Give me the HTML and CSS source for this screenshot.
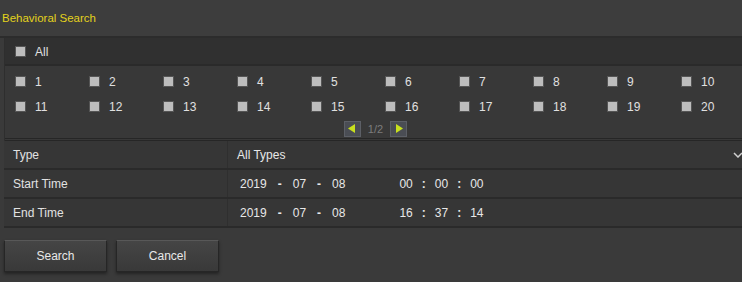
FILE: index.html
```html
<!DOCTYPE html>
<html lang="en">
<head>
    <meta charset="UTF-8">
    <title>Behavioral Search</title>
    <link rel="stylesheet" href="styles.css">
</head>
<body>
    <div class="title">Behavioral Search</div>
    <div class="panel">
        <div class="allrow">
            <label class="chk"><span class="box"></span>All</label>
        </div>
        <div class="channels">
            <label class="chk"><span class="box"></span>1</label>
            <label class="chk"><span class="box"></span>2</label>
            <label class="chk"><span class="box"></span>3</label>
            <label class="chk"><span class="box"></span>4</label>
            <label class="chk"><span class="box"></span>5</label>
            <label class="chk"><span class="box"></span>6</label>
            <label class="chk"><span class="box"></span>7</label>
            <label class="chk"><span class="box"></span>8</label>
            <label class="chk"><span class="box"></span>9</label>
            <label class="chk"><span class="box"></span>10</label>
            <label class="chk"><span class="box"></span>11</label>
            <label class="chk"><span class="box"></span>12</label>
            <label class="chk"><span class="box"></span>13</label>
            <label class="chk"><span class="box"></span>14</label>
            <label class="chk"><span class="box"></span>15</label>
            <label class="chk"><span class="box"></span>16</label>
            <label class="chk"><span class="box"></span>17</label>
            <label class="chk"><span class="box"></span>18</label>
            <label class="chk"><span class="box"></span>19</label>
            <label class="chk"><span class="box"></span>20</label>
        </div>
        <div class="pager">
            <span class="pbtn"><svg width="8" height="9" viewBox="0 0 8 9"><polygon points="7,0 7,9 0,4.5" fill="#c8e01e"/></svg></span>
            <span class="pnum">1/2</span>
            <span class="pbtn"><svg width="8" height="9" viewBox="0 0 8 9"><polygon points="1,0 1,9 8,4.5" fill="#c8e01e"/></svg></span>
        </div>
    </div>
    <div class="form">
        <div class="row">
            <div class="key">Type</div>
            <div class="val">All Types
                <svg class="arrow" width="10" height="6" viewBox="0 0 10 6"><polyline points="1,1 5,5 9,1" fill="none" stroke="#cfcfcf" stroke-width="1.5"/></svg>
            </div>
        </div>
        <div class="row">
            <div class="key">Start Time</div>
            <div class="val time"><span>2019</span><b>-</b><span>07</span><b>-</b><span>08</span><i></i><span>00</span><b class="colon">:</b><span>00</span><b class="colon">:</b><span>00</span></div>
        </div>
        <div class="row">
            <div class="key">End Time</div>
            <div class="val time"><span>2019</span><b>-</b><span>07</span><b>-</b><span>08</span><i></i><span>16</span><b class="colon">:</b><span>37</span><b class="colon">:</b><span>14</span></div>
        </div>
    </div>
    <div class="buttons">
        <button class="btn">Search</button>
        <button class="btn">Cancel</button>
    </div>
</body>
</html>
```

FILE: styles.css
```css
body {
    margin: 0;
    background-color: #3a3a3a;
    font-family: "Liberation Sans", Arial, sans-serif;
    font-size: 12px;
    color: #e0e0e0;
    width: 742px;
    height: 282px;
    overflow: hidden;
}
.title {
    height: 36px;
    line-height: 36px;
    padding-left: 2px;
    color: #e3d21c;
    font-size: 11.5px;
    border-bottom: 2px solid #2c2c2c;
    background-color: #3d3d3d;
}
.panel {
    margin-left: 4px;
    border-left: 1px solid #2e2e2e;
}
.allrow {
    height: 25px;
    display: flex;
    align-items: center;
    padding: 1px 0 0 10px;
    background-color: #303030;
    border-bottom: 2px solid #2a2a2a;
}
.chk {
    display: flex;
    align-items: center;
    gap: 9px;
}
.box {
    display: inline-block;
    width: 11px;
    height: 11px;
    background-color: #bdbdbd;
    border: 1px solid #555;
    box-sizing: border-box;
}
.channels {
    display: grid;
    grid-template-columns: repeat(10, 74px);
    grid-auto-rows: 25px;
    padding: 3px 0 0 10px;
    background-color: #383838;
}
.pager {
    height: 19px;
    display: flex;
    justify-content: center;
    align-items: center;
    gap: 7px;
    background-color: #383838;
    padding-left: 4px;
    border-bottom: 3px double #262626;
}
.pbtn {
    display: flex;
    align-items: center;
    justify-content: center;
    width: 17px;
    height: 16px;
    background-color: #4a4d54;
    border: 1px solid #5c5f66;
    box-sizing: border-box;
}
.pnum {
    color: #7c7c7c;
    font-size: 11px;
}
.form {
    margin-left: 4px;
}
.row {
    display: flex;
    height: 27px;
    border-bottom: 2px solid #2a2a2a;
    background-color: #363636;
}
.key {
    width: 224px;
    box-sizing: border-box;
    padding-left: 9px;
    display: flex;
    align-items: center;
    color: #e2e2e2;
    border-right: 1px solid #2f2f2f;
}
.val {
    flex: 1;
    display: flex;
    align-items: center;
    padding-left: 9px;
    color: #e8e8e8;
}
.arrow {
    margin-left: auto;
    position: relative;
    left: 1px;
}
.time {
    padding-left: 12px;
}
.time b {
    font-weight: bold;
    width: 26px;
    text-align: center;
}
.time b.colon {
    width: 22px;
}
.time i {
    width: 54px;
}
.buttons {
    display: flex;
    gap: 9px;
    padding: 12px 0 0 4px;
}
.btn {
    margin: 0;
    width: 103px;
    height: 32px;
    font-family: inherit;
    font-size: 12px;
    color: #e8e8e8;
    background: linear-gradient(#454545, #393939);
    border: 1px solid #262626;
    border-top-color: #585858;
    box-shadow: 0 2px 3px rgba(0, 0, 0, 0.4);
}
```
